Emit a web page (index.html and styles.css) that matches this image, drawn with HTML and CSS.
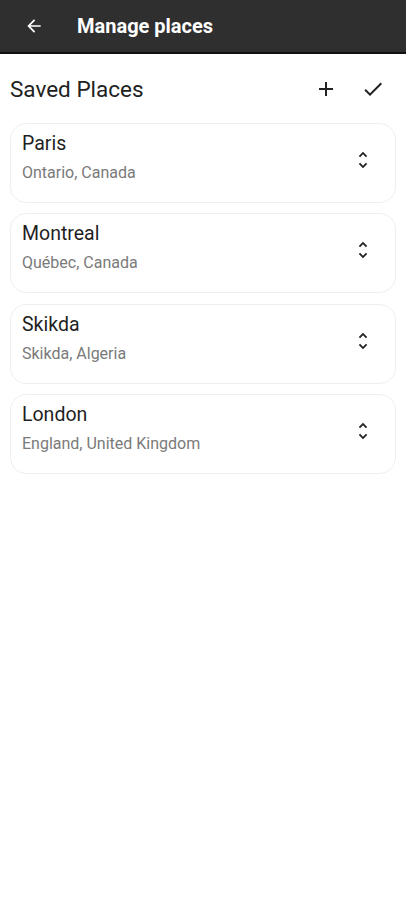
FILE: index.html
```html
<!DOCTYPE html>
<html>
<head>
<meta charset="utf-8">
<link rel="stylesheet" href="styles.css">
</head>
<body>
<header class="appbar">
  <svg class="back" width="20" height="20" viewBox="0 0 24 24"><path d="M20 11H7.83l5.59-5.59L12 4l-8 8 8 8 1.41-1.41L7.83 13H20v-2z" fill="#fff"/></svg>
  <h1 class="title">Manage places</h1>
</header>
<main class="content">
  <div class="toolbar">
    <h2 class="heading">Saved Places</h2>
    <div class="actions">
      <svg class="act" width="24" height="24" viewBox="0 0 24 24"><path d="M19 13h-6v6h-2v-6H5v-2h6V5h2v6h6v2z" fill="#222"/></svg>
      <svg class="act" width="24" height="24" viewBox="0 0 24 24"><path d="M9 16.17L4.83 12l-1.42 1.41L9 19 21 7l-1.41-1.41z" fill="#222"/></svg>
    </div>
  </div>
  <ul class="list">
    <li class="card"><div class="info"><div class="name">Paris</div><div class="region">Ontario, Canada</div></div><svg class="handle" width="22" height="22" viewBox="0 0 24 24"><path d="M12 5.83L15.17 9l1.41-1.41L12 3 7.41 7.59 8.83 9 12 5.83zm0 12.34L8.83 15l-1.41 1.41L12 21l4.59-4.59L15.17 15 12 18.17z" fill="#222"/></svg></li>
    <li class="card"><div class="info"><div class="name">Montreal</div><div class="region">Québec, Canada</div></div><svg class="handle" width="22" height="22" viewBox="0 0 24 24"><path d="M12 5.83L15.17 9l1.41-1.41L12 3 7.41 7.59 8.83 9 12 5.83zm0 12.34L8.83 15l-1.41 1.41L12 21l4.59-4.59L15.17 15 12 18.17z" fill="#222"/></svg></li>
    <li class="card"><div class="info"><div class="name">Skikda</div><div class="region">Skikda, Algeria</div></div><svg class="handle" width="22" height="22" viewBox="0 0 24 24"><path d="M12 5.83L15.17 9l1.41-1.41L12 3 7.41 7.59 8.83 9 12 5.83zm0 12.34L8.83 15l-1.41 1.41L12 21l4.59-4.59L15.17 15 12 18.17z" fill="#222"/></svg></li>
    <li class="card"><div class="info"><div class="name">London</div><div class="region">England, United Kingdom</div></div><svg class="handle" width="22" height="22" viewBox="0 0 24 24"><path d="M12 5.83L15.17 9l1.41-1.41L12 3 7.41 7.59 8.83 9 12 5.83zm0 12.34L8.83 15l-1.41 1.41L12 21l4.59-4.59L15.17 15 12 18.17z" fill="#222"/></svg></li>
  </ul>
</main>
</body>
</html>
```
FILE: styles.css
```css
* { box-sizing: border-box; }
html, body { margin: 0; padding: 0; background: #fff; }
body { font-family: Roboto, "Noto Sans", sans-serif; color: #1f1f1f; width: 406px; height: 900px; }
.appbar {
  height: 54px;
  background: #2f2f2f;
  border-bottom: 2px solid #111;
  display: flex;
  align-items: center;
  padding-left: 24px;
  gap: 33px;
}
.back { display: block; }
.title { margin: 0; font-size: 20px; font-weight: 700; color: #fff; }
.content { padding: 0 10px; }
.toolbar {
  height: 69px;
  display: flex;
  align-items: center;
  justify-content: space-between;
}
.heading { margin: 0; font-size: 22.5px; font-weight: 400; color: #222; }
.actions { display: flex; gap: 23px; padding-right: 11px; }
.act { display: block; }
.list { list-style: none; margin: 0; padding: 0; display: flex; flex-direction: column; gap: 10.3px; }
.card {
  height: 80px;
  border: 1px solid #efefef;
  border-radius: 16px;
  display: flex;
  align-items: flex-start;
  padding: 8px 21px 14px 11px;
}
.info { flex: 1; display: flex; flex-direction: column; gap: 8px; }
.name { font-size: 19.5px; color: #1f1f1f; line-height: 23px; }
.region { font-size: 16px; color: #7a7a7a; line-height: 19px; }
.handle { display: block; align-self: center; }
```
